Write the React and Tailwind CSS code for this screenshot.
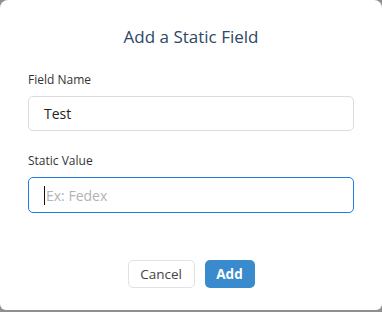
export default function App() {
  return (
    <div className="h-[312px] w-[382px] bg-[#8f8f8f] font-['Open_Sans',sans-serif]">
      <div className="flex h-[310px] flex-col rounded-b-md rounded-t-lg bg-white px-[28px]">
        <h2 className="pt-[24px] text-center text-[17px] font-medium leading-[26px] text-[#2c4866]">Add a Static Field</h2>
        <label className="mt-[21px] text-[12px] leading-[18px] text-[#333]">Field Name</label>
        <div className="mt-[7px] flex h-[35px] items-center rounded-[5px] border border-[#dcdcdc] px-[15px] text-[14px] text-[#222]">
          Test
        </div>
        <label className="mt-[21px] text-[12px] leading-[18px] text-[#333]">Static Value</label>
        <div className="mt-[7px] flex h-[36px] items-center rounded-[5px] border border-[#1f7ae8] px-[15px] text-[14px] text-[#b3b3b3]">
          <span className="mr-[1px] h-[19px] w-[1px] bg-[#111]" />
          Ex: Fedex
        </div>
        <div className="mt-[47px] flex justify-center gap-[10px]">
          <button className="h-[28px] w-[67px] rounded-[5px] border border-[#e2e2e2] bg-white text-[13.5px] text-[#444]">Cancel</button>
          <button className="h-[28px] w-[50px] rounded-[5px] bg-[#3a8ace] text-[13.5px] font-bold text-white">Add</button>
        </div>
      </div>
    </div>
  )
}
